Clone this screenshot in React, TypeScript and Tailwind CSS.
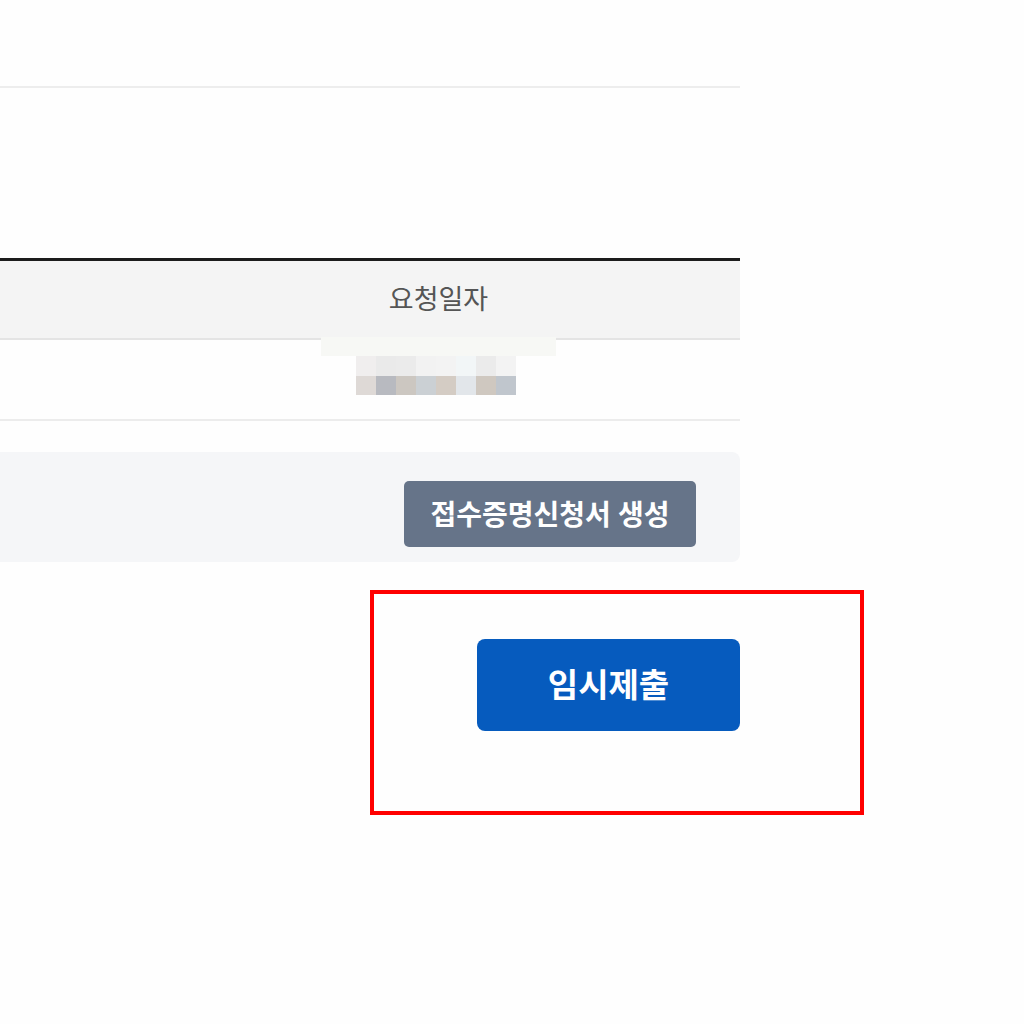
const blurTop = ['#f0eeee', '#eaeaea', '#ebebeb', '#f2f2f2', '#f3f3f3', '#f2f6f7', '#ebebeb', '#f3f3f3'];
const blurBottom = ['#ded9d6', '#b8bac0', '#ccc7c1', '#cbd0d4', '#d4ccc4', '#e2e6ea', '#cfc8c0', '#c0c6cd'];

// pixelated (masked) date value in the table cell
const MaskedDate = () => (
  <div className="flex flex-col items-center">
    <div className="h-[19px] w-[235px] bg-[#f7f8f5]" />
    <div className="mr-[6px] flex">
      {blurTop.map((c, i) => (
        <div key={i} className="h-[20px] w-[20px]" style={{ backgroundColor: c }} />
      ))}
    </div>
    <div className="mr-[6px] flex">
      {blurBottom.map((c, i) => (
        <div key={i} className="h-[19px] w-[20px]" style={{ backgroundColor: c }} />
      ))}
    </div>
  </div>
);

export default function App() {
  return (
    <div
      className="relative min-h-[1024px] w-[1024px] bg-[#fefefe] text-[#333]"
      style={{ fontFamily: '"Noto Sans", "Noto Sans CJK KR", sans-serif' }}
    >
      <div className="flex w-[740px] flex-col pt-[86px]">
        <div className="h-[2px] bg-[#ededed]" />
        <div className="h-[170px]" />

        {/* table */}
        <div className="border-t-[3px] border-[#1c1c1c]">
          <div className="grid grid-cols-[321px_235px_1fr] border-b-2 border-[#e4e4e4] bg-[#f4f4f4]">
            <div />
            <div className="flex h-[77px] items-center justify-center text-[27px] text-[#555]">요청일자</div>
            <div />
          </div>
          <div className="grid grid-cols-[321px_235px_1fr] border-b-2 border-[#ececec]">
            <div />
            <div className="-mt-[3px] flex h-[82px] justify-center">
              <MaskedDate />
            </div>
            <div />
          </div>
        </div>

        {/* action panel */}
        <div className="mt-[31px] flex h-[110px] items-start justify-end rounded-r-[8px] bg-[#f5f6f8] pr-[44px] pt-[29px]">
          <button className="flex h-[66px] w-[292px] items-center justify-center rounded-[5px] bg-[#667489] text-[28px] font-bold text-white">
            접수증명신청서 생성
          </button>
        </div>

        <div className="mt-[77px] flex justify-end">
          <button className="flex h-[92px] w-[263px] items-center justify-center rounded-[8px] bg-[#065bbe] text-[33px] font-bold text-white">
            임시제출
          </button>
        </div>
      </div>

      {/* annotation highlight */}
      <div className="absolute left-[370px] top-[590px] h-[225px] w-[494px] border-4 border-[#ff0000]" />
    </div>
  );
}
